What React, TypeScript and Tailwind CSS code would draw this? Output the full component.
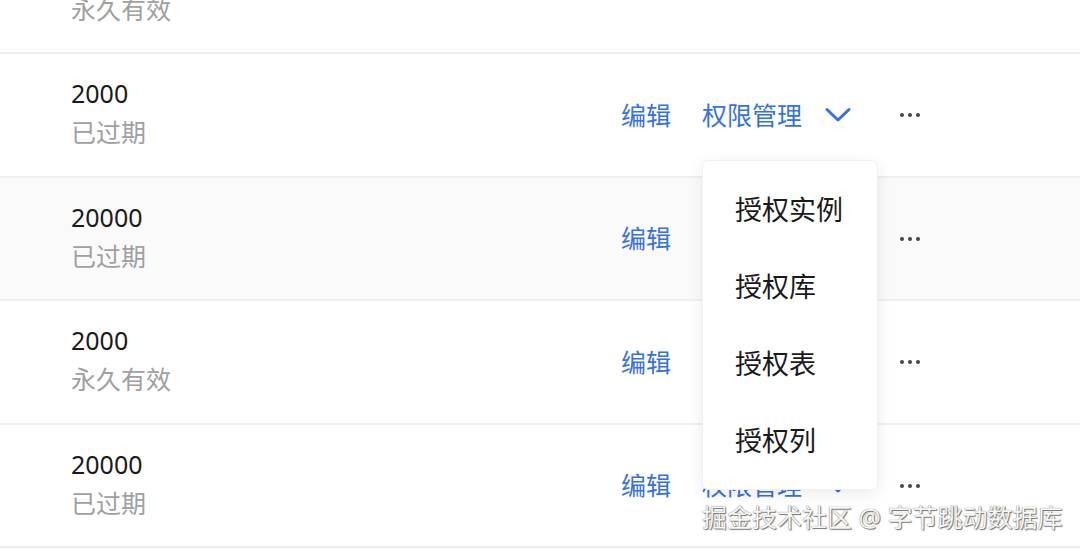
import React from 'react';

type Row = { amount: string; status: string; hover?: boolean; noActions?: boolean };

const rows: Row[] = [
  { amount: '20000', status: '永久有效', noActions: true },
  { amount: '2000', status: '已过期' },
  { amount: '20000', status: '已过期', hover: true },
  { amount: '2000', status: '永久有效' },
  { amount: '20000', status: '已过期' },
];

const menuItems = ['授权实例', '授权库', '授权表', '授权列'];

const Chevron = () => (
  <svg width="28" height="16" viewBox="0 0 28 16" fill="none" className="shrink-0">
    <path d="M3 2.5 L14 13 L25 2.5" stroke="#3471e3" strokeWidth="3" strokeLinecap="round" strokeLinejoin="round" />
  </svg>
);

const Dots = () => (
  <div className="flex items-center gap-[4px]">
    <span className="w-[4px] h-[4px] rounded-full bg-[#444]" />
    <span className="w-[4px] h-[4px] rounded-full bg-[#444]" />
    <span className="w-[4px] h-[4px] rounded-full bg-[#444]" />
  </div>
);

const App: React.FC = () => {
  return (
    <div
      className="relative w-[1080px] h-[549px] overflow-hidden bg-white"
      style={{ fontFamily: '"Noto Sans", "Noto Sans CJK SC", sans-serif' }}
    >
      <div className="-mt-[69.5px]">
        {rows.map((row, i) => (
          <div
            key={i}
            className={`relative flex items-center h-[123.5px] border-b-2 border-[#efefef] ${row.hover ? 'bg-[#fafafa]' : 'bg-white'}`}
          >
            <div className="pl-[71px] flex flex-col w-[621px]">
              <span className="text-[25px] leading-[38px] text-[#1a1a1a] -mt-[4px]">{row.amount}</span>
              <span className="text-[25px] leading-[38px] text-[#a0a0a0] mt-[1px]">{row.status}</span>
            </div>
            {!row.noActions && (
              <>
                <span className="text-[25px] leading-[38px] text-[#3471e3]">编辑</span>
                <span className="ml-[31px] text-[25px] leading-[38px] text-[#3471e3]">权限管理</span>
                <span className="ml-[22px] mt-[1px]">
                  <Chevron />
                </span>
                <span className="ml-[48px] mt-[1px]">
                  <Dots />
                </span>
              </>
            )}

            {i === 1 && (
              <div className="absolute z-10 left-[702px] top-[106px] w-[176px] h-[330px] bg-white rounded-[6px] border border-[#f0f0f0] shadow-[0_4px_16px_rgba(0,0,0,0.08)] pt-[11px]">
                {menuItems.map((m) => (
                  <div key={m} className="h-[77px] flex items-center pl-[32px] text-[27px] text-[#1a1a1a]">
                    {m}
                  </div>
                ))}
              </div>
            )}
          </div>
        ))}
      </div>

      <div
        className="absolute z-20 left-[702px] top-[500px] text-[25px] leading-[34px] text-[#f7f7f7] whitespace-nowrap"
        style={{ textShadow: '0 0 1px #555, 1px 1px 1px #777' }}
      >
        掘金技术社区 @ 字节跳动数据库
      </div>
    </div>
  );
};

export default App;
